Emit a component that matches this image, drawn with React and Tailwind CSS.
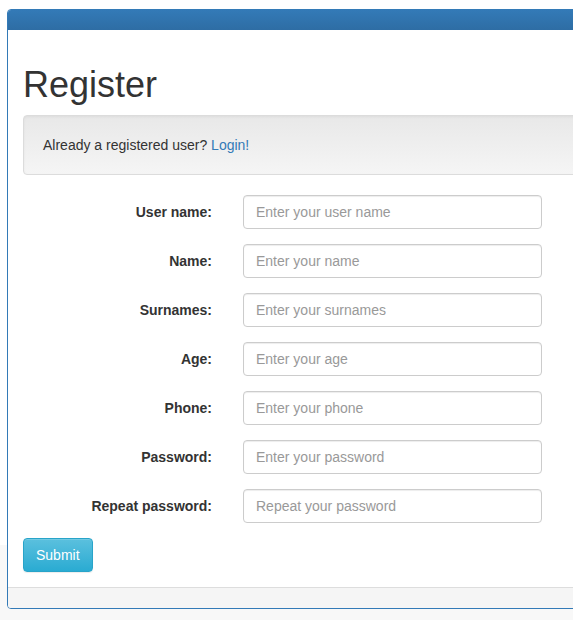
import React from 'react';

const fields = [
  { label: 'User name:', placeholder: 'Enter your user name', type: 'text' },
  { label: 'Name:', placeholder: 'Enter your name', type: 'text' },
  { label: 'Surnames:', placeholder: 'Enter your surnames', type: 'text' },
  { label: 'Age:', placeholder: 'Enter your age', type: 'text' },
  { label: 'Phone:', placeholder: 'Enter your phone', type: 'text' },
  { label: 'Password:', placeholder: 'Enter your password', type: 'password' },
  { label: 'Repeat password:', placeholder: 'Repeat your password', type: 'password' },
];

const App = () => {
  return (
    <div className="min-h-[620px] w-[573px] overflow-hidden bg-[linear-gradient(to_bottom,#ffffff_545px,#f8f8f8_545px)] pt-[9px] pl-[7px] font-['Liberation_Sans',Arial,sans-serif] text-[14px] leading-[20px] text-[#333]">
      {/* Panel */}
      <div className="w-[700px] rounded-[4px] border border-[#337ab7] bg-white">
        <div className="h-[20px] rounded-t-[3px] bg-[linear-gradient(to_bottom,#337ab7,#2e6da4)]"></div>

        <div className="p-[15px]">
          <h1 className="mt-[20px] mb-[10px] text-[36px] leading-[39.6px] font-normal text-[#333]">Register</h1>

          <div className="mb-[20px] rounded-[4px] border border-[#dcdcdc] bg-[linear-gradient(to_bottom,#e8e8e8,#f5f5f5)] p-[19px] shadow-[inset_0_1px_3px_rgba(0,0,0,0.05)]">
            Already a registered user? <a href="#" className="text-[#337ab7]">Login!</a>
          </div>

          <form onSubmit={(e) => e.preventDefault()}>
            {fields.map((f) => (
              <div key={f.label} className="mb-[15px] flex items-start">
                <label className="w-[189px] pt-[7px] text-right font-bold">{f.label}</label>
                <input
                  type={f.type}
                  placeholder={f.placeholder}
                  className="ml-[31px] h-[34px] w-[299px] rounded-[4px] border border-[#ccc] bg-white px-[12px] py-[6px] text-[14px] text-[#555] shadow-[inset_0_1px_1px_rgba(0,0,0,0.075)] placeholder:text-[#999] focus:outline-none"
                />
              </div>
            ))}
            <button
              type="submit"
              className="h-[34px] rounded-[4px] border border-[#28a4c9] bg-[linear-gradient(to_bottom,#5bc0de,#2aabd2)] px-[12px] text-white shadow-[inset_0_1px_0_rgba(255,255,255,0.15),0_1px_1px_rgba(0,0,0,0.075)]"
            >
              Submit
            </button>
          </form>
        </div>

        <div className="h-[21px] rounded-b-[3px] border-t border-[#ddd] bg-[#f5f5f5]"></div>
      </div>
    </div>
  );
};

export default App;
